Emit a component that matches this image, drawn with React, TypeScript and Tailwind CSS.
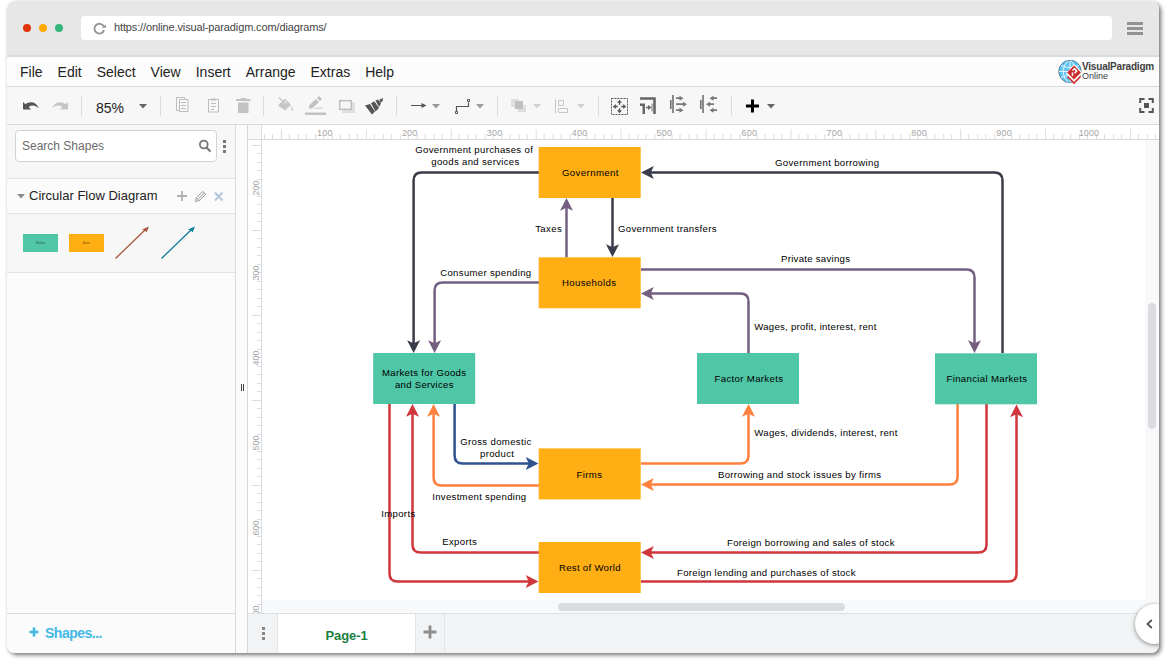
import type { ReactNode } from "react";

const MENU = ["File", "Edit", "Select", "View", "Insert", "Arrange", "Extras", "Help"];

const DARK = "#3b3c4b";
const PURPLE = "#745f80";
const RED = "#d0373d";
const ORANGE = "#ff813d";
const BLUE = "#30538f";

const GREEN_FILL = "#4fc6a6";
const AMBER_FILL = "#ffae13";

type Point = [number, number];

const NODES = [
  { x: 538.7, y: 147, fill: AMBER_FILL },
  { x: 538.7, y: 257.3, fill: AMBER_FILL },
  { x: 538.7, y: 448.4, fill: AMBER_FILL },
  { x: 538.7, y: 542, fill: AMBER_FILL },
  { x: 373.2, y: 353, fill: GREEN_FILL },
  { x: 697, y: 353, fill: GREEN_FILL },
  { x: 935, y: 353.3, fill: GREEN_FILL },
];

const EDGES: { color: string; points: Point[] }[] = [
  { color: DARK, points: [[539, 172.6], [413.6, 172.6], [413.6, 353]] },
  { color: DARK, points: [[1002.5, 353], [1002.5, 172.6], [641, 172.6]] },
  { color: DARK, points: [[612.5, 197.5], [612.5, 257]] },
  { color: PURPLE, points: [[566.5, 257.5], [566.5, 198]] },
  { color: PURPLE, points: [[539, 282.5], [434.6, 282.5], [434.6, 353]] },
  { color: PURPLE, points: [[641, 269.4], [974.5, 269.4], [974.5, 353]] },
  { color: PURPLE, points: [[748.5, 353], [748.5, 293.5], [641, 293.5]] },
  { color: BLUE, points: [[454.6, 404], [454.6, 463.5], [538.5, 463.5]] },
  { color: ORANGE, points: [[539, 485.4], [433.6, 485.4], [433.6, 404]] },
  { color: ORANGE, points: [[641, 463.5], [748.5, 463.5], [748.5, 404]] },
  { color: ORANGE, points: [[957.6, 404], [957.6, 484.5], [641, 484.5]] },
  { color: RED, points: [[539, 552.4], [412.5, 552.4], [412.5, 404]] },
  { color: RED, points: [[389.5, 404], [389.5, 581.4], [538.5, 581.4]] },
  { color: RED, points: [[986.5, 404], [986.5, 552.4], [641, 552.4]] },
  { color: RED, points: [[641, 581.4], [1016.5, 581.4], [1016.5, 404.5]] },
];

// text, left, baseline, width
const LABELS: [string, number, number, number][] = [
  ["Government purchases of", 415.3, 153, 117.5],
  ["goods and services", 431.3, 165, 88],
  ["Government", 562, 176, 56.5],
  ["Government borrowing", 775, 166, 104],
  ["Taxes", 535.2, 232, 26.5],
  ["Government transfers", 618, 232, 98.5],
  ["Private savings", 781, 262, 69],
  ["Consumer spending", 440.2, 276, 91],
  ["Households", 562, 286, 54],
  ["Wages, profit, interest, rent", 754.3, 330, 122],
  ["Markets for Goods", 382, 376, 84],
  ["and Services", 395, 388, 58.5],
  ["Factor Markets", 714.5, 382, 68.5],
  ["Financial Markets", 946.5, 382, 80.5],
  ["Wages, dividends, interest, rent", 754.3, 436, 143],
  ["Gross domestic", 460.2, 445, 71],
  ["product", 480, 457, 34],
  ["Firms", 576.5, 478, 25.5],
  ["Borrowing and stock issues by firms", 718, 478, 163],
  ["Investment spending", 432.2, 500, 94],
  ["Imports", 381.2, 517, 34],
  ["Exports", 442.2, 545, 34.5],
  ["Foreign borrowing and sales of stock", 727, 546, 167.5],
  ["Rest of World", 559, 571, 61.5],
  ["Foreign lending and purchases of stock", 677, 576, 178.5],
];

function Edge({ color, points }: { color: string; points: Point[] }) {
  const r = 8;
  const tip = points[points.length - 1];
  const prev = points[points.length - 2];
  const dx = Math.sign(tip[0] - prev[0]);
  const dy = Math.sign(tip[1] - prev[1]);
  const angle = (Math.atan2(dy, dx) * 180) / Math.PI;
  const end: Point = [tip[0] - dx * 9, tip[1] - dy * 9];

  let d = `M${points[0].join(" ")}`;
  if (points.length === 3) {
    const [a, b] = points;
    const ax = Math.sign(b[0] - a[0]);
    const ay = Math.sign(b[1] - a[1]);
    d += ` L${b[0] - ax * r} ${b[1] - ay * r} Q${b[0]} ${b[1]} ${b[0] + dx * r} ${b[1] + dy * r}`;
  }
  d += ` L${end.join(" ")}`;

  return (
    <g>
      <path d={d} fill="none" stroke={color} strokeWidth="2.5" />
      <path
        d="M0 0 L-12.8 -6.5 L-9.8 0 L-12.8 6.5 Z"
        fill={color}
        transform={`translate(${tip[0]} ${tip[1]}) rotate(${angle})`}
      />
    </g>
  );
}

function Diagram() {
  return (
    <svg className="block" width="883" height="460" viewBox="262 140 883 460">
      {EDGES.map((e, i) => (
        <Edge key={i} {...e} />
      ))}
      {NODES.map((n, i) => (
        <rect key={i} x={n.x} y={n.y} width="102" height="51" fill={n.fill} />
      ))}
      <g fontFamily="Liberation Sans, Arial, sans-serif" fontSize="9.6" fill="#000">
        {LABELS.map(([text, x, y, w]) => (
          <text key={text} x={x} y={y} textLength={w}>
            {text}
          </text>
        ))}
      </g>
    </svg>
  );
}

function TopRuler() {
  const ticks = Array.from({ length: 106 }, (_, i) => i);
  return (
    <svg className="block border-l border-[#d9dadd]" width="897" height="14" viewBox="262 125 897 14">
      {ticks.map((i) => {
        const x = Math.floor(264.3 + i * 8.5) + 0.5;
        const long = (i - 2) % 10 === 0;
        return <line key={i} x1={x} x2={x} y1={long ? 129 : 134} y2="139" stroke="#dcdde0" />;
      })}
      <g fontFamily="Liberation Sans, Arial, sans-serif" fontSize="9" fill="#a6a6a6" textAnchor="middle">
        {[1, 2, 3, 4, 5, 6, 7, 8, 9, 10].map((n) => (
          <text key={n} x={239.8 + n * 85} y="136" textLength={n === 10 ? 20.5 : 15.5}>
            {n * 100}
          </text>
        ))}
      </g>
    </svg>
  );
}

function LeftRuler() {
  const ticks = Array.from({ length: 56 }, (_, i) => i);
  return (
    <svg className="block" width="13" height="473" viewBox="248 140 13 473">
      {ticks.map((i) => {
        const y = Math.floor(145 + i * 8.5) + 0.5;
        return <line key={i} y1={y} y2={y} x1={i % 10 === 0 ? 252 : 257} x2="261" stroke="#dcdde0" />;
      })}
      <g fontFamily="Liberation Sans, Arial, sans-serif" fontSize="9" fill="#a6a6a6" textAnchor="middle">
        {[2, 3, 4, 5, 6, 7].map((n) => (
          <text key={n} transform={`translate(258.5 ${18 + n * 85}) rotate(-90)`}>
            {n * 100}
          </text>
        ))}
      </g>
    </svg>
  );
}

// Slice of the toolbar strip: x is where the slice starts, w its width.
function Tool({ x, w, children }: { x: number; w: number; children: ReactNode }) {
  return (
    <svg className="block shrink-0" width={w} height="36" viewBox={`${x} 88 ${w} 36`}>
      {children}
    </svg>
  );
}

function Separator() {
  return <div className="h-5 w-px shrink-0 bg-[#dadce0]" />;
}

function Caret({ x, color }: { x: number; color: string }) {
  return <path d={`M${x} 104h8l-4 4.5z`} fill={color} />;
}

function Toolbar() {
  return (
    <div className="flex h-[38px] items-center border-b border-[#d9dadd] bg-[#f7f7f7]">
      <Tool x={7} w={74}>
        <path d="M23 102l2.500 2.200c4-3.400 11-2.600 13.200 4.300-3-3.400-6.700-4-10-1.600l2.300 2.600h-8z" fill="#555" />
        <path d="M68 102l-2.500 2.200c-4-3.400-11-2.600-13.200 4.300 3-3.400 6.700-4 10-1.600l-2.300 2.600h8z" fill="#c6c6c6" />
      </Tool>
      <Separator />
      <span className="w-[56px] pt-1 pl-[14px] text-sm leading-4 text-[#222]">85%</span>
      <Tool x={138} w={22}>
        <path d="M139 104h8l-4 4.500z" fill="#666" />
      </Tool>
      <Separator />
      <Tool x={161} w={102}>
        <g fill="none" stroke="#bdbdbd">
          <path d="M179.500 110.500h-3v-13h8v2" />
          <path d="M179.500 99.500h8.500v12h-8.500z" />
          <path d="M181 102.500h5M181 105.500h5M181 108.500h5M178 97.500h5" />
          <path d="M208.500 99.500h10v12.500h-10z" />
          <path d="M211 99.500h5" strokeWidth="2" />
          <path d="M211 103.500h5M211 106.500h5M211 109.500h3" />
        </g>
        <path d="M236 99h4.500l1-1h4l1 1h4v2h-14.500zM238 102.500h10.500v10.500h-10.500z" fill="#c2c2c2" />
      </Tool>
      <Separator />
      <Tool x={264} w={132}>
        <path d="M284.500 99l6.500 6-6 5.500-7-5z" fill="#c6c6c6" />
        <path d="M279 97.500l6 6M280.500 104.500l4.500-4.800 4 4z" fill="#eee" stroke="#c6c6c6" strokeWidth="1.300" />
        <path d="M292.200 106c-2.600 4-1 5 0 5s2.600-1 0-5z" fill="#d8d8d8" />
        <g fill="#c2c2c2">
          <path d="M309 108.500v-3l7-6.500 3 3-7 6.500zM317 98l2-2 3 3-2 2z" />
          <path d="M313.500 109l2-1.500h7v1.500z" opacity=".6" />
          <path d="M305 112.500h21v2.500h-21z" />
          <path d="M342 102h13v11h-13z" fill="#dfdfdf" />
        </g>
        <rect x="339.700" y="100.700" width="11.600" height="8.600" fill="#f7f7f7" stroke="#bdbdbd" strokeWidth="1.500" />
        <path
          d="M365 105.500l5-1.500 5 7.500-3 3zM371 103l3.500-1.500 4.500 6.500-3.500 3.500zM375.500 100.500l2.500-1 3 4-2 3.500zM379.500 99.500l3.500-1.500-.5 3.500-2.500 1z"
          fill="#555"
        />
      </Tool>
      <Separator />
      <Tool x={397} w={100}>
        <path d="M411 105.500h12" stroke="#555" />
        <path d="M421.500 103l5 2.500-5 2.500z" fill="#555" />
        <Caret x={432} color="#999" />
        <path d="M456.500 111v-4.500h12v-4" fill="none" stroke="#555" strokeWidth="1.200" />
        <path d="M455.500 111.500h2v2h-2zM467.500 99.500h2v2h-2z" fill="none" stroke="#555" />
        <Caret x={476} color="#999" />
      </Tool>
      <Separator />
      <Tool x={498} w={100}>
        <path d="M511 99h8v8h-8zM518 105h8v7h-8z" fill="#dedede" />
        <path d="M515 101h8v8h-8z" fill="#c0c0c0" />
        <Caret x={533} color="#d2d2d2" />
        <path d="M555.500 99.500v14M558.500 100.500h5v5h-5zM558.500 108.500h9v4h-9z" fill="none" stroke="#c6c6c6" />
        <Caret x={577} color="#d2d2d2" />
      </Tool>
      <Separator />
      <Tool x={599} w={132}>
        <rect x="611.500" y="98.500" width="16" height="16" fill="none" stroke="#555" strokeDasharray="2 1" />
        <path
          d="M619.500 99.800l2.500 3h-1.800v2h-1.400v-2h-1.800zM619.500 113.200l2.500-3h-1.800v-2h-1.400v2h-1.800zM612.800 106.500l3-2.500v1.800h2v1.400h-2v1.800zM626.200 106.500l-3-2.500v1.800h-2v1.400h2v1.800z"
          fill="#555"
        />
        <path d="M640 98.500h14.500v15.500" fill="none" stroke="#666" strokeWidth="2.600" />
        <path d="M640 103.500h5v10.500h-2.500v-8h-2.500z" fill="#666" />
        <path d="M646 107.500h3" stroke="#666" strokeWidth="1.500" />
        <path d="M648 105l3.500 2.500-3.500 2.500z" fill="#666" />
        <path d="M652 103.500v8" stroke="#777" />
        <g stroke="#777" fill="none">
          <path d="M673 95v18M670.800 100v9M703 95v18M700.800 100v9" strokeWidth="1.700" />
          <path
            d="M676 98.200h4M676 104.200h7M676 110.200h4M712 98.200h5M709 104.200h5M712 110.200h5"
            strokeWidth="1.700"
          />
        </g>
        <path
          d="M679.500 95.700l4 2.500-4 2.500zM683 101.700l4 2.500-4 2.500zM679.500 107.700l4 2.500-4 2.500zM713.500 95.700l-4 2.500 4 2.500zM710 101.700l-4 2.500 4 2.500zM713.500 107.700l-4 2.500 4 2.500z"
          fill="#777"
        />
      </Tool>
      <Separator />
      <Tool x={732} w={50}>
        <path d="M752.500 99.500v13M746 106h13" stroke="#000" strokeWidth="3" />
        <Caret x={767} color="#666" />
      </Tool>
      <div className="ml-auto pr-[3px]">
        <Tool x={1138} w={18}>
          <path
            d="M1140.200 103v-4h4.300M1148.500 99h4.300v4M1152.800 108v4h-4.300M1144.500 112h-4.300v-4"
            fill="none"
            stroke="#555"
            strokeWidth="2"
          />
          <path d="M1144 103h5v5h-5z" fill="#555" />
        </Tool>
      </div>
    </div>
  );
}

function BrowserBar() {
  return (
    <div className="flex h-[56px] shrink-0 items-center border-b-2 border-[#d8dadb] bg-[#e7e7e7]">
      <div className="flex w-[74px] gap-2 pl-4">
        <span className="size-2 rounded-full bg-[#e1320c]" />
        <span className="size-2 rounded-full bg-[#ffaa00]" />
        <span className="size-2 rounded-full bg-[#33b67a]" />
      </div>
      <div className="flex h-6 w-[1031px] items-center rounded-sm bg-white pl-3 text-[11px] text-[#444]">
        <svg className="mr-2" width="13" height="13" viewBox="0 0 13 13">
          <path d="M10.800 4.500a4.900 4.900 0 1 0 .3 3.600" fill="none" stroke="#929292" strokeWidth="1.800" />
          <path d="M8.500 5.800h4.500v-3z" fill="#929292" />
        </svg>
        <span className="pb-px tracking-[-0.13px]">https://online.visual-paradigm.com/diagrams/</span>
      </div>
      <div className="ml-[15px] flex w-4 flex-col gap-[2px]">
        <span className="h-[3px] bg-[#929292]" />
        <span className="h-[3px] bg-[#929292]" />
        <span className="h-[3px] bg-[#929292]" />
      </div>
    </div>
  );
}

function Logo() {
  return (
    <div className="ml-auto flex items-center pr-[5px]">
      <svg width="24" height="26" viewBox="0 0 24 26">
        <circle cx="12" cy="12.500" r="11.200" fill="#63c4f1" stroke="#48819c" />
        <path
          d="M12 1.500v22M1 12.500h22M3 6.500q9 4 18 0M3 18.500q9-4 18 0M10 1.500q-10 11 0 22M13 1.500q9 11 0 22"
          fill="none"
          stroke="#e2f5fd"
        />
        <path d="M16 5l8.500 8.500L16 25.500l-8-11z" fill="#fff" />
        <path d="M16 6.500l7 7-7 7-7-7z" fill="#cf2e2f" />
        <path d="M9.500 17.500l6.500 6.500 6.500-6.500" fill="none" stroke="#cf2e2f" strokeWidth="1.700" />
        <path d="M14.500 17v-3.500M14.500 11.500l2-1.800 2.200 2.300-2.200 2.300" fill="none" stroke="#fff" strokeWidth="1.500" />
      </svg>
      <div className="w-[72px] pb-[2px] whitespace-nowrap text-[#404040]">
        <div className="text-[10px] leading-[10px] font-bold tracking-[-0.2px]">VisualParadigm</div>
        <div className="text-[9px] leading-[8px]">Online</div>
      </div>
    </div>
  );
}

function Sidebar() {
  return (
    <div className="flex w-[229px] shrink-0 flex-col border-r border-[#d9dadd] bg-[#fbfbfb]">
      <div className="flex h-[54px] border-b border-[#e3e3e3] bg-[#f7f7f7] pt-[5px] pl-2">
        <div className="flex h-8 w-[202px] items-center justify-between rounded border border-[#d0d2d5] bg-white pr-1 pl-1.5">
          <span className="text-[12px] text-[#6b6b6b]">Search Shapes</span>
          <svg width="14" height="14" viewBox="0 0 14 14" fill="none" stroke="#777">
            <circle cx="5.800" cy="5.500" r="3.900" strokeWidth="1.800" />
            <path d="M8.500 8.500l4 4" strokeWidth="2.200" />
          </svg>
        </div>
        <div className="mt-[10px] ml-1.5 flex flex-col gap-[2px]">
          <span className="size-[3px] bg-[#777]" />
          <span className="size-[3px] bg-[#777]" />
          <span className="size-[3px] bg-[#777]" />
        </div>
      </div>
      <div className="flex h-[35px] items-center border-b border-[#e3e3e3]">
        <svg className="mr-1 ml-[10px]" width="8" height="5" viewBox="0 0 8 5">
          <path d="M0 0h8l-4 4.500z" fill="#8a8a8a" />
        </svg>
        <span className="w-[146px] pb-px text-[13px] text-[#222]">Circular Flow Diagram</span>
        <svg width="50" height="14" viewBox="175 188 50 14" fill="none">
          <path d="M182 190v10M177 195h10" stroke="#b0b0b0" strokeWidth="1.800" />
          <path d="M195.500 200.500l.8-3.800 6.500-6.200 3 2.800-6.500 6.200zM196.500 197l2.500 2.500M198.500 197.500l6-5.500" stroke="#999" />
          <path d="M215 191.500l7.500 8M222.500 191.500l-7.500 8" stroke="#b3c5d8" strokeWidth="1.900" />
        </svg>
      </div>
      <div className="flex h-[59px] items-center gap-[11px] border-b border-[#e3e3e3] bg-[#f7f7f7] pl-4">
        <div className="flex h-[18px] w-[35px] items-center justify-center bg-[#4fc6a6] text-[3px] text-[#235e4e]">Market</div>
        <div className="flex h-[18px] w-[35px] items-center justify-center bg-[#ffae13] text-[3px] text-[#7c5200]">Actor</div>
        <svg width="35" height="34" viewBox="0 0 35 34">
          <path d="M.5 32.500L30 4" stroke="#a8563e" strokeWidth="1.300" />
          <path d="M34 .5l-2.500 6-1.500-2-3-1z" fill="#a8563e" />
        </svg>
        <svg width="35" height="34" viewBox="0 0 35 34">
          <path d="M.5 32.500L30 4" stroke="#107d98" strokeWidth="1.300" />
          <path d="M34 .5l-2.500 6-1.500-2-3-1z" fill="#107d98" />
        </svg>
      </div>
      <div className="mt-auto flex h-10 items-center border-t border-[#d9dadd] pl-[22px] text-sm font-bold text-[#42b8e6]">
        <svg className="mr-1.5 mb-1" width="10" height="10" viewBox="0 0 10 10">
          <path d="M5 .5v9M.5 5h9" stroke="#42b8e6" strokeWidth="2.600" />
        </svg>
        <span className="pb-px tracking-[-0.5px]">Shapes...</span>
      </div>
    </div>
  );
}

function PageTabs() {
  return (
    <div className="flex h-10 border-t border-[#dfe0e2] bg-[#f1f3f4]">
      <div className="flex w-[30px] flex-col items-center justify-center gap-[2px] border-r border-[#e2e3e5] pl-0.5">
        <span className="size-[3px] bg-[#888]" />
        <span className="size-[3px] bg-[#888]" />
        <span className="size-[3px] bg-[#888]" />
      </div>
      <div className="flex w-[138px] items-center justify-center border-r border-[#e2e3e5] bg-white pt-1 text-[13px] font-bold text-[#1a8040]">
        <span className="tracking-[-0.1px]">Page-1</span>
      </div>
      <div className="flex w-[29px] justify-center border-r border-[#e2e3e5] pt-[11px]">
        <svg width="14" height="14" viewBox="0 0 14 14">
          <path d="M7 .5v13M.5 7h13" stroke="#8c8c8c" strokeWidth="2.800" />
        </svg>
      </div>
    </div>
  );
}

function Workspace() {
  return (
    <div className="flex w-[911px] shrink-0 flex-col">
      <div className="flex h-[15px] border-b border-[#d9dadd] bg-white">
        <div className="w-[13px] shrink-0 bg-[#f9f9f9]" />
        <TopRuler />
      </div>
      <div className="flex h-[473px]">
        <div className="w-[14px] shrink-0 border-r border-[#d9dadd] bg-white">
          <LeftRuler />
        </div>
        <div className="relative h-full w-[897px] bg-[#f8f9fb]">
          <div className="h-[460px] w-[883px] bg-white">
            <Diagram />
          </div>
          <div className="absolute top-[163px] right-[3px] h-[126px] w-2 rounded-full bg-[#dadce0]" />
          <div className="absolute bottom-[2px] left-[296px] h-2 w-[287px] rounded-full bg-[#dadce0]" />
        </div>
      </div>
      <PageTabs />
    </div>
  );
}

export default function App() {
  return (
    <div className="h-[665px] w-[1170px] overflow-hidden bg-white pt-px pl-[7px] font-['Liberation_Sans',Arial,sans-serif]">
      <div className="relative flex h-[652px] w-[1152px] flex-col overflow-hidden rounded-lg bg-[#fbfbfb] shadow-[2px_2px_4px_rgba(0,0,0,0.55)]">
        <BrowserBar />
        <div className="flex h-[30px] shrink-0 items-center border-b border-[#d9dadd] bg-[#fcfcfc] pl-[13px]">
          <div className="flex gap-[15px] text-sm text-[#222]">
            {MENU.map((item) => (
              <span key={item}>{item}</span>
            ))}
          </div>
          <Logo />
        </div>
        <Toolbar />
        <div className="flex h-[528px] shrink-0">
          <Sidebar />
          <div className="flex w-3 shrink-0 items-center justify-center gap-px border-r border-[#d9dadd] bg-[#fbfbfb] pb-1 pl-0.5">
            <span className="h-[7px] w-px bg-[#444]" />
            <span className="h-[7px] w-px bg-[#444]" />
          </div>
          <Workspace />
        </div>
        <div className="absolute right-[-16px] bottom-[9px] flex size-10 items-center rounded-full bg-white pl-[11px] shadow-[0_1px_4px_rgba(0,0,0,0.45)]">
          <svg width="7" height="10" viewBox="0 0 7 10">
            <path d="M5.800 1L1.500 5l4.300 4" fill="none" stroke="#555" strokeWidth="1.800" />
          </svg>
        </div>
      </div>
    </div>
  );
}
